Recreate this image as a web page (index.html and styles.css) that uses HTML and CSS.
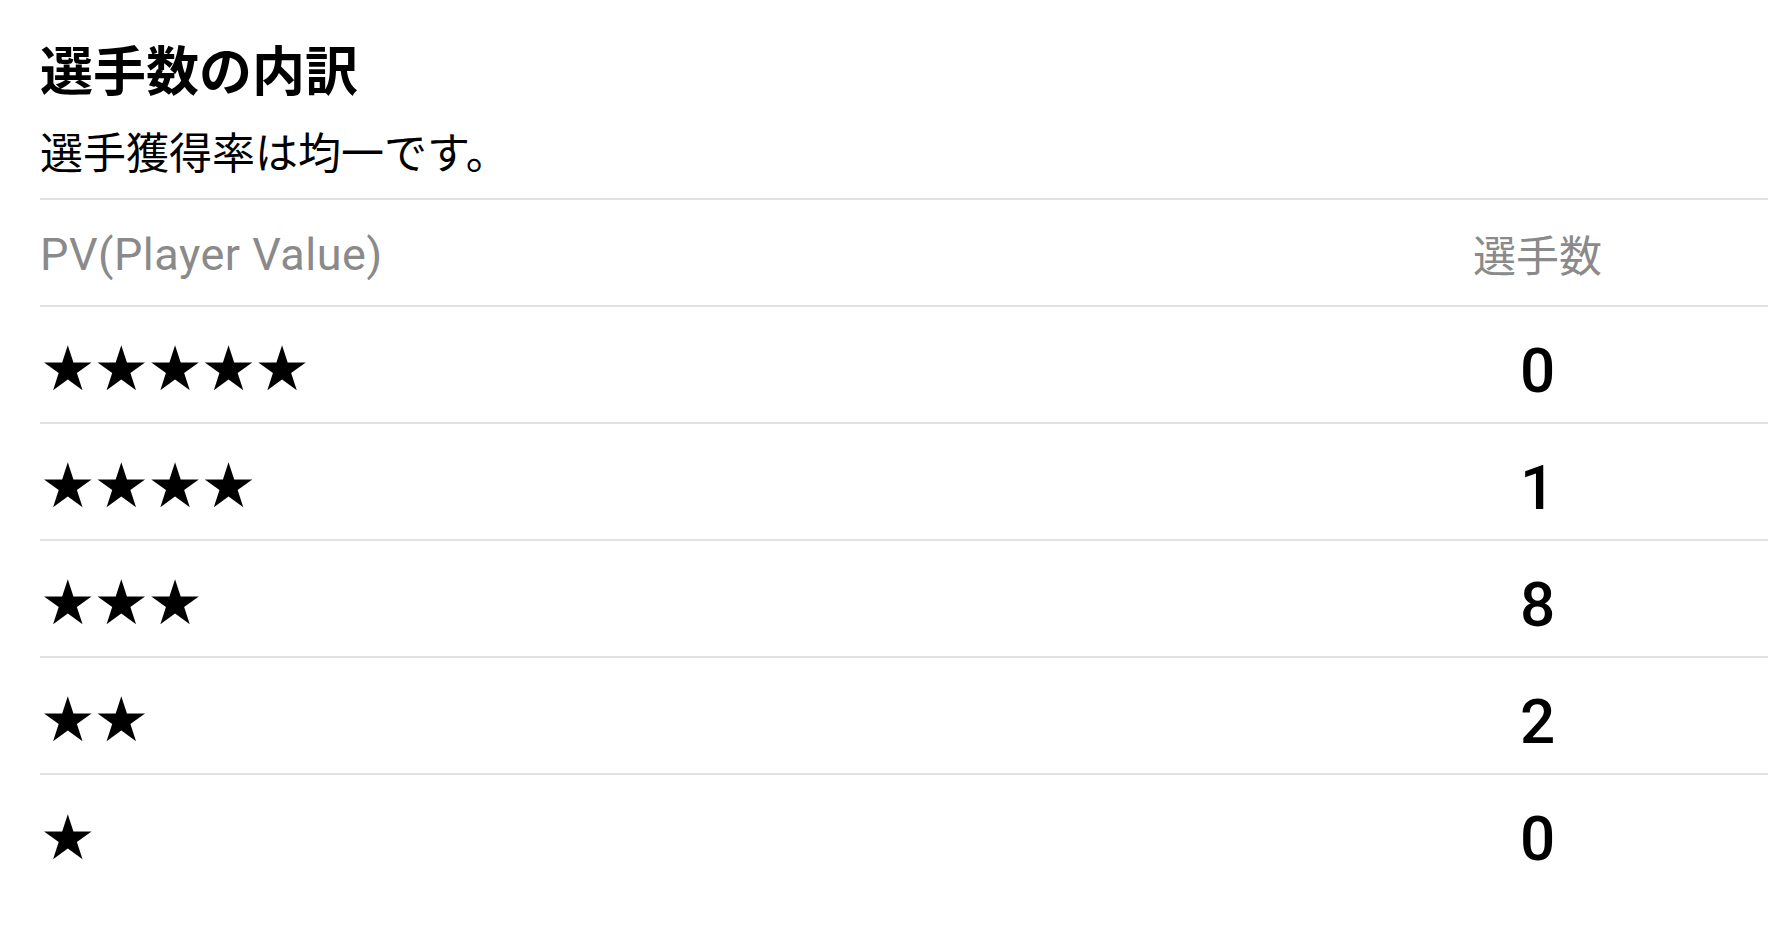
FILE: index.html
```html
<!DOCTYPE html>
<html lang="ja">
<head>
<meta charset="utf-8">
<title>選手数の内訳</title>
<link rel="stylesheet" href="styles.css">
</head>
<body>
<section class="breakdown">
  <h1 class="title">選手数の内訳</h1>
  <p class="subtitle">選手獲得率は均一です。</p>
  <table class="pv-table">
    <thead>
      <tr>
        <th class="col-pv">PV(Player Value)</th>
        <th class="col-count">選手数</th>
      </tr>
    </thead>
    <tbody>
      <tr><td class="stars">★★★★★</td><td class="count">0</td></tr>
      <tr><td class="stars">★★★★</td><td class="count">1</td></tr>
      <tr><td class="stars">★★★</td><td class="count">8</td></tr>
      <tr><td class="stars">★★</td><td class="count">2</td></tr>
      <tr class="last"><td class="stars">★</td><td class="count">0</td></tr>
    </tbody>
  </table>
</section>
</body>
</html>
```
FILE: styles.css
```css
html, body {
  margin: 0;
  padding: 0;
  background: #ffffff;
}

body {
  font-family: Roboto, "Noto Sans CJK JP", sans-serif;
  color: #000;
  overflow: hidden;
}

.breakdown {
  padding: 42px 0 0 40px;
}

.title {
  margin: 0;
  font-family: "Noto Sans CJK JP", sans-serif;
  font-weight: 700;
  font-size: 53px;
  line-height: 53px;
  letter-spacing: 0;
}

.subtitle {
  margin: 34px 0 0 0;
  font-family: "Noto Sans CJK JP", sans-serif;
  font-weight: 400;
  font-size: 43px;
  line-height: 43px;
}

.pv-table {
  margin-top: 26px;
  width: 100%;
  border-collapse: collapse;
  table-layout: fixed;
}

.pv-table th,
.pv-table td {
  padding: 0;
  border-top: 2px solid #e2e2e2;
}

.pv-table thead th {
  height: 107px;
  box-sizing: border-box;
  color: #8a8a8a;
  font-weight: 400;
  font-size: 43px;
  vertical-align: middle;
}

.col-pv {
  text-align: left;
  font-family: Roboto, "Noto Sans CJK JP", sans-serif;
}

.pv-table thead th.col-pv {
  font-size: 45px;
  letter-spacing: 0.5px;
  padding-top: 3px;
}

.col-count {
  width: 461px;
  text-align: center;
  font-family: "Noto Sans CJK JP", sans-serif;
}

.pv-table tbody td {
  height: 117px;
  vertical-align: middle;
  padding-top: 9px;
  box-sizing: border-box;
}

.stars {
  font-family: "DejaVu Sans", sans-serif;
  font-size: 62px;
  line-height: 1;
  letter-spacing: -2px;
  text-align: left;
}

.pv-table tbody td.count {
  padding-top: 12px;
}

.count {
  text-align: center;
  font-family: Roboto, sans-serif;
  font-weight: 500;
  font-size: 62px;
  line-height: 1;
}
```
